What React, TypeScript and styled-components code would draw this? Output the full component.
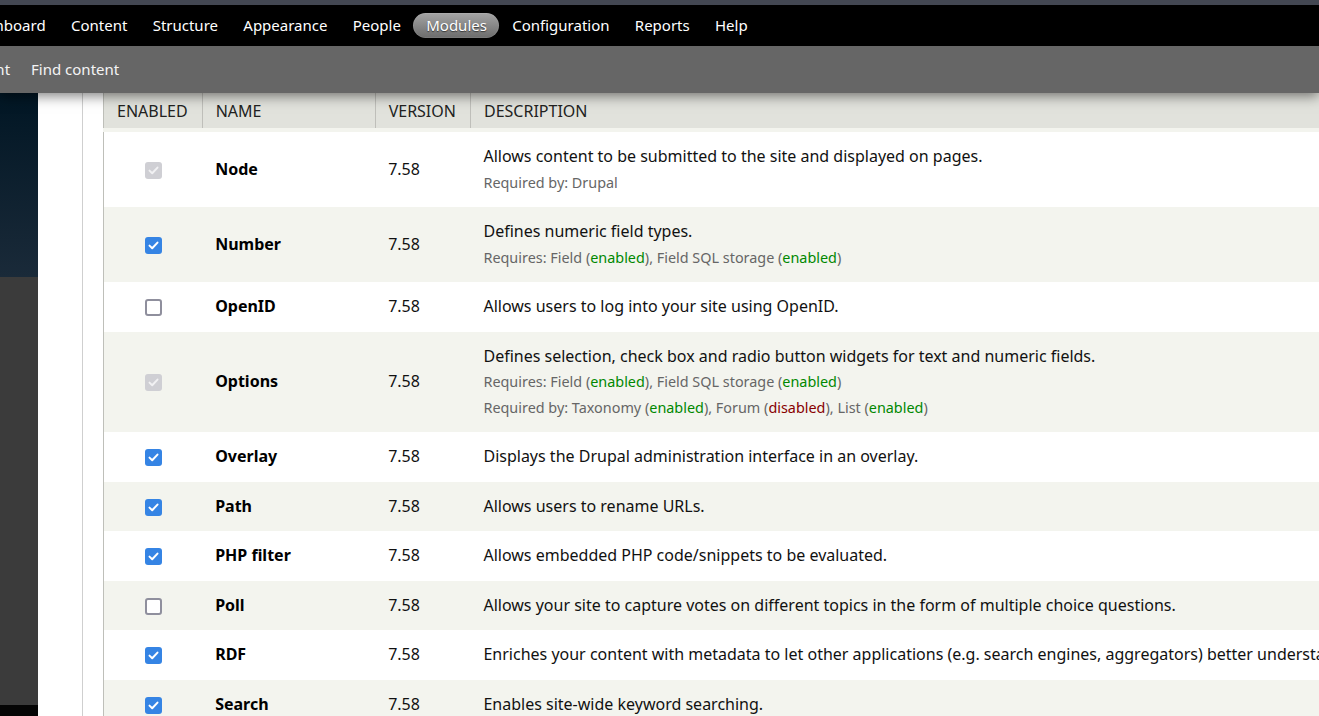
import React from "react";
import styled, { createGlobalStyle } from "styled-components";

const GlobalStyle = createGlobalStyle`
  html, body {
    margin: 0;
    padding: 0;
    overflow: hidden;
    background: #fff;
  }
  body {
    font-family: "Noto Sans", "Open Sans", sans-serif;
  }
`;

const Page = styled.div`
  width: 100vw;
  height: 100vh;
  display: flex;
  flex-direction: column;
  overflow: hidden;
`;

const TopBar = styled.header`
  position: relative;
  z-index: 5;
  box-shadow: 0 3px 12px rgba(0, 0, 0, 0.5);
`;

const TopStrip = styled.div`
  height: 5px;
  background: #434752;
`;

const Toolbar = styled.nav`
  height: 41px;
  background: #000;
  display: flex;
  align-items: center;
  overflow: hidden;
`;

const MenuList = styled.ul<{ $offset: number }>`
  list-style: none;
  margin: 0 0 0 ${(p) => p.$offset}px;
  padding: 0;
  display: flex;
  align-items: center;
  white-space: nowrap;
`;

const MenuItem = styled.li<{ $active?: boolean }>`
  font-size: 15px;
  line-height: 21px;
  color: #fff;
  padding: 2px 12.3px 2px 13px;
  border-radius: 13px;
  ${(p) =>
    p.$active &&
    `
    background: linear-gradient(#a4a4a4, #6c6c6c);
    box-shadow: inset 0 0 0 1px rgba(255,255,255,0.08);
    text-shadow: 0 1px 1px rgba(0,0,0,0.55);
  `}
`;

const ShortcutBar = styled.div`
  height: 47px;
  background: #666;
  display: flex;
  align-items: center;
  overflow: hidden;
`;

const ShortcutItem = styled.li`
  font-size: 15px;
  line-height: 21px;
  color: #f4f4f4;
  padding: 0 10px 1px 11px;
`;

const Main = styled.div`
  flex: 1;
  display: flex;
  min-height: 0;
`;

const Backdrop = styled.div`
  width: 38px;
  flex: none;
  display: flex;
  flex-direction: column;
`;

const BackdropBlock = styled.div<{ $tone: "navy" | "grey" | "black" }>`
  height: ${(p) => (p.$tone === "navy" ? "184px" : p.$tone === "black" ? "11px" : "auto")};
  flex: ${(p) => (p.$tone === "grey" ? 1 : "none")};
  background: ${(p) =>
    p.$tone === "navy"
      ? "linear-gradient(#011624, #1a2a39)"
      : p.$tone === "grey"
      ? "#3b3b3b"
      : "#050505"};
`;

const Panel = styled.div`
  flex: 1;
  min-width: 0;
  background: #fff;
  padding-left: 44px;
  display: flex;
  overflow: hidden;
`;

const Content = styled.div`
  flex: 1;
  min-width: 0;
  border-left: 1px solid #cfcfcf;
  padding-left: 20px;
  overflow: hidden;
`;

const Table = styled.table`
  width: 1900px;
  border-collapse: collapse;
  border-left: 1px solid #bebfb9;
  font-size: 16px;
  color: #111;
`;

const Th = styled.th<{ $width?: number }>`
  ${(p) => (p.$width ? `width: ${p.$width}px;` : "")}
  background: #e1e2dc;
  border-right: 1px solid #bfbfba;
  border-bottom: 1px solid #bebfb9;
  padding: 8px 14px 6px 13px;
  height: 21px;
  text-align: left;
  font-weight: normal;
  text-transform: uppercase;
  font-size: 16px;
  line-height: 21px;
  color: #222;
`;

const Row = styled.tr<{ $even: boolean }>`
  background: ${(p) => (p.$even ? "#f3f4ee" : "#fff")};
  &:first-child td {
    border-top: 4px solid #f3f4ee;
  }
`;

const Td = styled.td<{ $center?: boolean }>`
  padding: 14.25px 14px 14.25px 13px;
  vertical-align: middle;
  line-height: 21px;
  white-space: nowrap;
  ${(p) => (p.$center ? "text-align: center; padding-left: 0; padding-right: 0;" : "")}
`;

const Name = styled.span`
  font-weight: bold;
  color: #000;
`;

const Description = styled.div`
  line-height: 21px;
  color: #111;
`;

const Requirement = styled.div`
  margin-top: 5.5px;
  font-size: 14.4px;
  line-height: 20px;
  color: #666;
`;

const Status = styled.span<{ $state: "enabled" | "disabled" }>`
  color: ${(p) => (p.$state === "enabled" ? "#080" : "#800")};
`;

const Box = styled.span<{ $state: "checked" | "unchecked" | "locked" }>`
  display: inline-flex;
  align-items: center;
  justify-content: center;
  box-sizing: border-box;
  width: 17px;
  height: 17px;
  border-radius: 3px;
  vertical-align: middle;
  background: ${(p) =>
    p.$state === "checked" ? "#3584e4" : p.$state === "locked" ? "#cfcfd4" : "#fff"};
  border: ${(p) => (p.$state === "unchecked" ? "2px solid #8f8f9d" : "none")};
`;

type Check = "checked" | "unchecked" | "locked";

const Checkbox = ({ state }: { state: Check }) => (
  <Box $state={state}>
    {state !== "unchecked" && (
      <svg width="11" height="9" viewBox="0 0 11 9">
        <path
          d="M1.5 4.6 L4.2 7.2 L9.5 1.6"
          fill="none"
          stroke={state === "locked" ? "#f1f1f3" : "#fff"}
          strokeWidth="2"
          strokeLinecap="round"
          strokeLinejoin="round"
        />
      </svg>
    )}
  </Box>
);

type Req = { label: string; parts: [string, "enabled" | "disabled"][] };

type Module = {
  state: Check;
  name: string;
  description: string;
  requirements?: Req[];
  requiredBy?: string;
};

const modules: Module[] = [
  {
    state: "locked",
    name: "Node",
    description: "Allows content to be submitted to the site and displayed on pages.",
    requiredBy: "Drupal",
  },
  {
    state: "checked",
    name: "Number",
    description: "Defines numeric field types.",
    requirements: [
      { label: "Requires", parts: [["Field", "enabled"], ["Field SQL storage", "enabled"]] },
    ],
  },
  {
    state: "unchecked",
    name: "OpenID",
    description: "Allows users to log into your site using OpenID.",
  },
  {
    state: "locked",
    name: "Options",
    description:
      "Defines selection, check box and radio button widgets for text and numeric fields.",
    requirements: [
      { label: "Requires", parts: [["Field", "enabled"], ["Field SQL storage", "enabled"]] },
      {
        label: "Required by",
        parts: [
          ["Taxonomy", "enabled"],
          ["Forum", "disabled"],
          ["List", "enabled"],
        ],
      },
    ],
  },
  {
    state: "checked",
    name: "Overlay",
    description: "Displays the Drupal administration interface in an overlay.",
  },
  { state: "checked", name: "Path", description: "Allows users to rename URLs." },
  {
    state: "checked",
    name: "PHP filter",
    description: "Allows embedded PHP code/snippets to be evaluated.",
  },
  {
    state: "unchecked",
    name: "Poll",
    description:
      "Allows your site to capture votes on different topics in the form of multiple choice questions.",
  },
  {
    state: "checked",
    name: "RDF",
    description:
      "Enriches your content with metadata to let other applications (e.g. search engines, aggregators) better understand its relationships and attributes.",
  },
  {
    state: "checked",
    name: "Search",
    description: "Enables site-wide keyword searching.",
  },
];

const menu = [
  "Dashboard",
  "Content",
  "Structure",
  "Appearance",
  "People",
  "Modules",
  "Configuration",
  "Reports",
  "Help",
];

export default function App() {
  return (
    <Page>
      <GlobalStyle />
      <TopBar>
        <TopStrip />
        <Toolbar>
          <MenuList $offset={-45}>
            {menu.map((m) => (
              <MenuItem key={m} $active={m === "Modules"}>
                {m}
              </MenuItem>
            ))}
          </MenuList>
        </Toolbar>
        <ShortcutBar>
          <MenuList $offset={-87}>
            <ShortcutItem>Add content</ShortcutItem>
            <ShortcutItem>Find content</ShortcutItem>
          </MenuList>
        </ShortcutBar>
      </TopBar>
      <Main>
        <Backdrop>
          <BackdropBlock $tone="navy" />
          <BackdropBlock $tone="grey" />
          <BackdropBlock $tone="black" />
        </Backdrop>
        <Panel>
          <Content>
            <Table>
              <thead>
                <tr>
                  <Th $width={70}>Enabled</Th>
                  <Th $width={145}>Name</Th>
                  <Th $width={67}>Version</Th>
                  <Th>Description</Th>
                </tr>
              </thead>
              <tbody>
                {modules.map((m, i) => (
                  <Row key={m.name} $even={i % 2 === 1}>
                    <Td $center>
                      <Checkbox state={m.state} />
                    </Td>
                    <Td>
                      <Name>{m.name}</Name>
                    </Td>
                    <Td>7.58</Td>
                    <Td>
                      <Description>{m.description}</Description>
                      {m.requirements?.map((r) => (
                        <Requirement key={r.label}>
                          {r.label}:{" "}
                          {r.parts.map(([n, s], j) => (
                            <React.Fragment key={n}>
                              {j > 0 && ", "}
                              {n} (<Status $state={s}>{s}</Status>)
                            </React.Fragment>
                          ))}
                        </Requirement>
                      ))}
                      {m.requiredBy && <Requirement>Required by: {m.requiredBy}</Requirement>}
                    </Td>
                  </Row>
                ))}
              </tbody>
            </Table>
          </Content>
        </Panel>
      </Main>
    </Page>
  );
}
